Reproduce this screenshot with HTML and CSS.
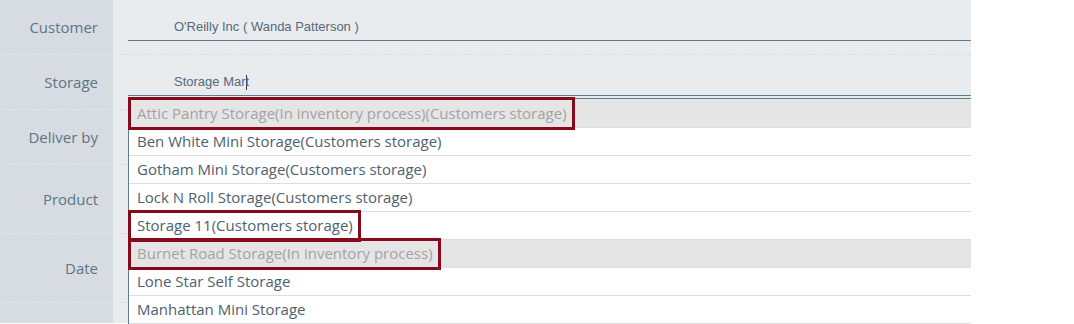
FILE: index.html
```html
<html>
<head>
  <title>Order</title>
  <link rel="stylesheet" href="styles.css">
</head>
<body>
  <div class="form">
    <div class="row">
      <div class="label">Customer</div>
      <div class="field">
        <div class="input">O'Reilly Inc ( Wanda Patterson )</div>
      </div>
    </div>
    <div class="row">
      <div class="label">Storage</div>
      <div class="field">
        <div class="input">Storage Mar<span class="caret"></span>t</div>
        <!-- dropdown: storage suggestions -->
        <ul class="dropdown">
          <li class="item disabled"><span class="flag">Attic Pantry Storage(In inventory process)(Customers storage)</span></li>
          <li class="item"><span>Ben White Mini Storage(Customers storage)</span></li>
          <li class="item"><span>Gotham Mini Storage(Customers storage)</span></li>
          <li class="item"><span>Lock N Roll Storage(Customers storage)</span></li>
          <li class="item"><span class="flag">Storage 11(Customers storage)</span></li>
          <li class="item disabled"><span class="flag">Burnet Road Storage(In inventory process)</span></li>
          <li class="item"><span>Lone Star Self Storage</span></li>
          <li class="item"><span>Manhattan Mini Storage</span></li>
        </ul>
      </div>
    </div>
    <div class="row">
      <div class="label">Deliver by</div>
      <div class="field"></div>
    </div>
    <div class="row tall">
      <div class="label">Product</div>
      <div class="field"></div>
    </div>
    <div class="row tall">
      <div class="label">Date</div>
      <div class="field"></div>
    </div>
    <div class="row end">
      <div class="label"></div>
      <div class="field"></div>
    </div>
  </div>
</body>
</html>
```

FILE: styles.css
```css
body {
  margin: 0;
  background: #fff;
  font: 15px "Open Sans", "Noto Sans", sans-serif;
  overflow: hidden;
}
.form {
  width: 971px;
  background: #e9ecef;
}
.row {
  display: grid;
  grid-template-columns: 113px 1fr;
  height: 54px;
  border-bottom: 1px dashed #dadee2;
}
.row.tall {
  height: 68px;
}
.row.end {
  height: 20px;
  border-bottom: none;
}
.label {
  background: #d7dce2;
  color: #5f7486;
  display: flex;
  align-items: center;
  justify-content: flex-end;
  padding-right: 15px;
}
.field {
  position: relative;
  padding: 14px 0 0 15px;
}
.input {
  height: 26px;
  padding-left: 46px;
  border-bottom: 1px solid #5f7d91;
  font: 13px "Liberation Sans", Arial, sans-serif;
  line-height: 26px;
  color: #56687a;
}
.caret {
  display: inline-block;
  width: 1px;
  height: 15px;
  margin-right: -1px;
  background: #2b3a46;
  vertical-align: middle;
}
.dropdown {
  position: absolute;
  top: 43px;
  left: 15px;
  right: 0;
  margin: 0;
  padding: 0;
  list-style: none;
  background: #fff;
  border-top: 1px solid #5f7d91;
  border-left: 1px solid #5f7d91;
  z-index: 2;
}
.item {
  display: flex;
  height: 27px;
  line-height: 27px;
  border-bottom: 1px solid #dedede;
  color: #4f5f6c;
  font-size: 15px;
}
.item:first-child {
  height: 28px;
  line-height: 29px;
}
.item span {
  padding: 0 5px 0 8px;
}
.item.disabled {
  background: #e5e5e5;
  color: #a3a3a3;
}
.flag {
  position: relative;
}
.flag::after {
  content: '';
  position: absolute;
  top: -2px;
  bottom: -3px;
  left: -1px;
  right: -3px;
  border: 3px solid #860a1c;
  z-index: 1;
}
```
